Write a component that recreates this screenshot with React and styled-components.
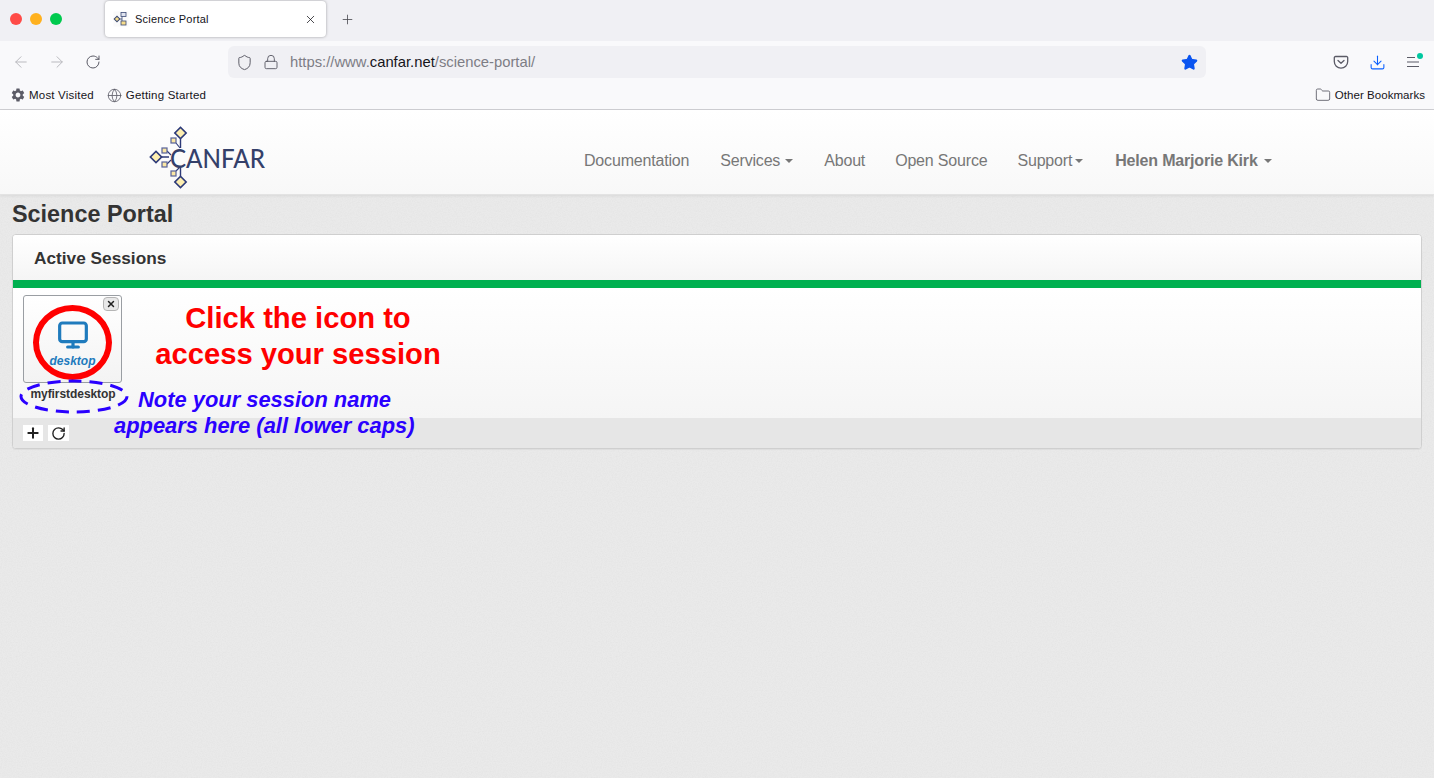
import React from "react"
import styled, { createGlobalStyle } from "styled-components"
import { X, Plus, ArrowLeft, ArrowRight, RotateCw, Lock, Shield, Star, Globe, Folder, Download, Monitor } from "lucide-react"
import { MdSettings } from "react-icons/md"

const GlobalStyle = createGlobalStyle`
  html, body {
    margin: 0;
    padding: 0;
    height: 100%;
    font-family: "Liberation Sans", Arial, sans-serif;
  }
  #root { height: 100%; }
`

const noise = encodeURIComponent(
  `<svg xmlns="http://www.w3.org/2000/svg" width="200" height="200"><filter id="n"><feTurbulence type="fractalNoise" baseFrequency="0.8" numOctaves="2" stitchTiles="stitch"/><feColorMatrix values="0 0 0 0 0.7 0 0 0 0 0.7 0 0 0 0 0.7 0.6 0 0 0 -0.2"/></filter><rect width="200" height="200" filter="url(#n)"/></svg>`
)

const Page = styled.div`
  position: relative;
  width: 1434px;
  height: 778px;
  overflow: hidden;
  display: flex;
  flex-direction: column;
  background-color: #eaeaea;
  background-image: url("data:image/svg+xml,${noise}");
`

const TabStrip = styled.div`
  height: 41px;
  background: #f0f0f4;
  display: flex;
  align-items: flex-start;
  flex-shrink: 0;
`

const TrafficLights = styled.div`
  display: flex;
  gap: 8px;
  padding: 13px 0 0 10px;
  width: 105px;
  flex-shrink: 0;
  box-sizing: border-box;
`

const Light = styled.span`
  width: 12px;
  height: 12px;
  border-radius: 50%;
  background: ${(props) => props.color};
`

const Tab = styled.div`
  margin-top: 1px;
  width: 221px;
  height: 36px;
  box-sizing: border-box;
  background: #fff;
  border-radius: 4px;
  box-shadow: 0 0 3px rgba(0, 0, 0, 0.35);
  display: flex;
  align-items: center;
  padding: 0 9px 0 8px;
  font-size: 11px;
  letter-spacing: 0.2px;
  color: #15141a;
`

const TabTitle = styled.span`
  flex: 1;
  margin-left: 6px;
`

const NewTab = styled.div`
  margin: 12px 0 0 14px;
  display: flex;
  color: #4a4a50;
`

const Toolbar = styled.div`
  height: 42px;
  background: #f9f9fb;
  display: flex;
  align-items: center;
  flex-shrink: 0;
  padding-left: 12px;
`

const NavIcon = styled.span`
  display: flex;
  margin-right: ${(props) => props.$gap ?? 18}px;
  color: ${(props) => props.color || "#5b5b66"};
`

const UrlBar = styled.div`
  margin-left: 127px;
  width: 978px;
  height: 32px;
  box-sizing: border-box;
  border-radius: 6px;
  background: #f0f0f4;
  display: flex;
  align-items: center;
  padding: 0 8px 0 8px;
  color: #5b5b66;
`

const LockIcon = styled(Lock)`
  margin-left: 10px;
`

const Url = styled.div`
  flex: 1;
  margin-left: 11px;
  font-size: 14.8px;
  color: #7d7d85;
`

const UrlHost = styled.span`
  color: #15141a;
`

const ToolbarRight = styled.div`
  margin-left: 127px;
  display: flex;
  align-items: center;
  gap: 20px;
`

const MenuWrap = styled.span`
  position: relative;
  display: flex;
  color: #5b5b66;
`

const MenuDot = styled.span`
  position: absolute;
  top: -3px;
  right: -3px;
  width: 6px;
  height: 6px;
  border-radius: 50%;
  background: #00c8a0;
`

const Bookmarks = styled.div`
  height: 27px;
  box-sizing: border-box;
  background: #f9f9fb;
  border-bottom: 1px solid #cfcfd3;
  display: flex;
  align-items: center;
  flex-shrink: 0;
  padding: 0 9px 2px 10px;
  font-size: 11.5px;
  letter-spacing: 0.2px;
  color: #15141a;
`

const Bookmark = styled.div`
  display: flex;
  align-items: center;
  gap: ${(props) => props.$gap}px;
  margin-right: 13px;
  color: #15141a;
  svg { color: #5b5b66; }
`

const OtherBookmark = styled(Bookmark)`
  margin: 0 0 0 auto;
  letter-spacing: 0.05px;
`

const Navbar = styled.nav`
  height: 85px;
  flex-shrink: 0;
  box-sizing: border-box;
  background: linear-gradient(to bottom, #ffffff, #f8f8f8);
  border-bottom: 1px solid #e3e3e3;
  box-shadow: 0 1px 3px rgba(0, 0, 0, 0.07);
  display: flex;
  align-items: flex-start;
  padding: 15px 0 0 148px;
`

const NavLinks = styled.div`
  margin: 26px 0 0 300px;
  display: flex;
  align-items: center;
  font-size: 16px;
  line-height: 20px;
  letter-spacing: -0.18px;
  color: #777;
`

const NavLink = styled.span`
  margin-right: ${(props) => props.$gap}px;
  font-weight: ${(props) => (props.$bold ? 700 : 400)};
  display: flex;
  align-items: center;
`

const Caret = styled.span`
  display: inline-block;
  margin-left: ${(props) => props.$gap ?? 6}px;
  width: 0;
  height: 0;
  border-top: 4px solid #777;
  border-left: 4px solid transparent;
  border-right: 4px solid transparent;
`

const Main = styled.main`
  padding: 0 12px;
`

const PageTitle = styled.h1`
  margin: 0;
  padding: 6px 0 7px;
  font-size: 23.4px;
  line-height: 26px;
  font-weight: 700;
  color: #333;
`

const Panel = styled.section`
  width: 1410px;
  height: 215px;
  box-sizing: border-box;
  border: 1px solid #cfcfcf;
  border-radius: 4px;
  background: #fff;
  box-shadow: 0 1px 1px rgba(0, 0, 0, 0.05);
  overflow: hidden;
  display: flex;
  flex-direction: column;
`

const PanelHeading = styled.div`
  height: 45px;
  flex-shrink: 0;
  box-sizing: border-box;
  padding: 12px 21px 0;
  font-size: 17.25px;
  line-height: 22px;
  font-weight: 700;
  color: #333;
  background: linear-gradient(to bottom, #ffffff, #f5f5f5);
`

const GreenBar = styled.div`
  height: 8px;
  flex-shrink: 0;
  background: #00b050;
`

const PanelBody = styled.div`
  height: 130px;
  flex-shrink: 0;
  box-sizing: border-box;
  padding: 7px 0 0 10px;
  background: linear-gradient(to bottom, #ffffff, #f5f5f5);
`

const Session = styled.div`
  width: 100px;
`

const SessionCard = styled.div`
  position: relative;
  width: 99px;
  height: 88px;
  box-sizing: border-box;
  border: 1px solid #9a9ea3;
  border-radius: 3px;
  background: linear-gradient(to bottom, #ffffff, #f3f3f3);
  display: flex;
  flex-direction: column;
  align-items: center;
  padding-top: 23px;
  color: #1f7bbd;
`

const CloseButton = styled.span`
  position: absolute;
  top: 1px;
  right: 2px;
  width: 16px;
  height: 14px;
  box-sizing: border-box;
  border: 1px solid #b5b5b5;
  border-radius: 4px;
  background: #e8e8e8;
  display: flex;
  align-items: center;
  justify-content: center;
  color: #222;
`

const SessionType = styled.span`
  font-size: 12px;
  line-height: 13px;
  margin-top: 4px;
  font-weight: 700;
  font-style: italic;
  color: #1f7bbd;
`

const SessionName = styled.div`
  width: 100px;
  text-align: center;
  margin-top: 4px;
  font-size: 12px;
  line-height: 14px;
  font-weight: 700;
  letter-spacing: -0.06px;
  color: #333;
`

const PanelFooter = styled.div`
  flex: 1;
  background: #e6e6e6;
  display: flex;
  align-items: flex-start;
  gap: 5px;
  padding: 7px 0 0 10px;
`

const FooterButton = styled.span`
  width: ${(props) => props.$width}px;
  height: 16px;
  background: #fff;
  display: flex;
  align-items: center;
  justify-content: center;
  color: #222;
`

const RedRing = styled.div`
  position: absolute;
  left: 33px;
  top: 305px;
  width: 79px;
  height: 75px;
  box-sizing: border-box;
  border: 6px solid #ff0000;
  border-radius: 50%;
`

const BlueRing = styled.svg`
  position: absolute;
  left: 18px;
  top: 378px;
`

const RedNote = styled.div`
  position: absolute;
  left: 148px;
  top: 300px;
  width: 300px;
  text-align: center;
  font-size: 29.2px;
  line-height: 36px;
  font-weight: 700;
  color: #ff0000;
`

const BlueNote = styled.div`
  position: absolute;
  left: 114px;
  top: 387px;
  font-size: 21.9px;
  line-height: 26px;
  font-weight: 700;
  font-style: italic;
  color: #2a00ff;
`

const BlueNoteFirst = styled.div`
  margin-left: 24px;
`

const PocketIcon = () => (
  <svg width="16" height="16" viewBox="0 0 16 16" fill="none" stroke="#5b5b66" strokeWidth="1.3" strokeLinecap="round" strokeLinejoin="round">
    <path d="M2.5 2.5h11a1.2 1.2 0 0 1 1.2 1.2v3.8a6.7 6.7 0 0 1-13.4 0V3.7a1.2 1.2 0 0 1 1.2-1.2z" />
    <path d="M5 6.5l3 2.8 3-2.8" />
  </svg>
)

const MenuIcon = () => (
  <svg width="14" height="12" viewBox="0 0 14 12" fill="none" stroke="#5b5b66" strokeWidth="1.2">
    <path d="M1 1.5h8M1 6h12M1 10.5h12" />
  </svg>
)

const TabFavicon = () => (
  <svg width="16" height="16" viewBox="0 0 16 16" fill="none">
    <rect x="0.5" y="0.5" width="15" height="15" fill="#fafafa" />
    <path d="M3 8h6M9 3.5v9" stroke="#3b4a75" strokeWidth="0.8" />
    <rect x="2" y="6" width="4" height="4" transform="rotate(45 4 8)" fill="#f6dc8a" stroke="#3b4a75" />
    <rect x="8" y="1.5" width="5" height="4" fill="#dfe3ee" stroke="#3b4a75" strokeWidth="0.8" />
    <rect x="8" y="10" width="5" height="4" fill="#f6dc8a" stroke="#3b4a75" strokeWidth="0.8" />
  </svg>
)

const Diamond = ({ cx, cy }) => (
  <rect x={cx - 4} y={cy - 4} width="8" height="8" transform={`rotate(45 ${cx} ${cy})`} fill="#fdeeb0" stroke="#2d3a78" strokeWidth="1.6" />
)

const SmallSquare = ({ x, y }) => (
  <rect x={x} y={y} width="5" height="5" fill="#fbe7a4" stroke="#56629a" strokeWidth="1.2" />
)

const CanfarLogo = () => (
  <svg width="136" height="64" viewBox="0 0 136 64" fill="none">
    <path d="M32.5 14v9M32.5 42v9M14 32h7" stroke="#2d3a78" strokeWidth="1.4" />
    <path d="M19 26l4 4M19 39l4-4M28 18l4 5M28 46l4-4" stroke="#2d3a78" strokeWidth="1.1" />
    <Diamond cx={32.5} cy={8} />
    <Diamond cx={32.5} cy={57} />
    <Diamond cx={8} cy={32} />
    <SmallSquare x={23} y={13} />
    <SmallSquare x={23} y={46} />
    <SmallSquare x={14} y={23} />
    <SmallSquare x={14} y={37} />
    <text x="22" y="43" fontFamily="Lato, sans-serif" fontSize="27" fontWeight="500" fill="#34406a" textLength="95" lengthAdjust="spacingAndGlyphs">CANFAR</text>
  </svg>
)

const App = () => {
  return (
    <Page>
      <GlobalStyle />
      <TabStrip>
        <TrafficLights>
          <Light color="#ff4b47" />
          <Light color="#ffb11e" />
          <Light color="#00ca4e" />
        </TrafficLights>
        <Tab>
          <TabFavicon />
          <TabTitle>Science Portal</TabTitle>
          <X size={13} strokeWidth={1.4} />
        </Tab>
        <NewTab>
          <Plus size={15} strokeWidth={1.3} />
        </NewTab>
      </TabStrip>

      <Toolbar>
        <NavIcon color="#b8b8bd"><ArrowLeft size={18} strokeWidth={1.3} /></NavIcon>
        <NavIcon color="#b8b8bd" $gap={19}><ArrowRight size={18} strokeWidth={1.3} /></NavIcon>
        <NavIcon $gap={0}><RotateCw size={16} strokeWidth={1.5} /></NavIcon>
        <UrlBar>
          <Shield size={17} strokeWidth={1.4} />
          <LockIcon size={16} strokeWidth={1.4} />
          <Url>https://www.<UrlHost>canfar.net</UrlHost>/science-portal/</Url>
          <Star size={17} fill="#0a54f0" color="#0a54f0" />
        </UrlBar>
        <ToolbarRight>
          <PocketIcon />
          <NavIcon color="#0a60ff" $gap={0}><Download size={17} strokeWidth={1.5} /></NavIcon>
          <MenuWrap>
            <MenuIcon />
            <MenuDot />
          </MenuWrap>
        </ToolbarRight>
      </Toolbar>

      <Bookmarks>
        <Bookmark $gap={3}><MdSettings size={16} />Most Visited</Bookmark>
        <Bookmark $gap={4}><Globe size={15} strokeWidth={1.3} />Getting Started</Bookmark>
        <OtherBookmark $gap={4}><Folder size={16} strokeWidth={1.3} />Other Bookmarks</OtherBookmark>
      </Bookmarks>

      <Navbar>
        <CanfarLogo />
        <NavLinks>
          <NavLink $gap={31}>Documentation</NavLink>
          <NavLink $gap={31}>Services<Caret $gap={5} /></NavLink>
          <NavLink $gap={30}>About</NavLink>
          <NavLink $gap={30}>Open Source</NavLink>
          <NavLink $gap={32}>Support<Caret $gap={3} /></NavLink>
          <NavLink $bold $gap={0}>Helen Marjorie Kirk<Caret /></NavLink>
        </NavLinks>
      </Navbar>

      <Main>
        <PageTitle>Science Portal</PageTitle>
        <Panel>
          <PanelHeading>Active Sessions</PanelHeading>
          <GreenBar />
          <PanelBody>
            <Session>
              <SessionCard>
                <CloseButton><X size={10} strokeWidth={3.5} /></CloseButton>
                <Monitor size={32} strokeWidth={2.4} />
                <SessionType>desktop</SessionType>
              </SessionCard>
              <SessionName>myfirstdesktop</SessionName>
            </Session>
          </PanelBody>
          <PanelFooter>
            <FooterButton $width={20}><Plus size={16} strokeWidth={3} /></FooterButton>
            <FooterButton $width={21}><RotateCw size={15} strokeWidth={2.2} /></FooterButton>
          </PanelFooter>
        </Panel>
      </Main>

      <RedRing />
      <BlueRing width="112" height="38" viewBox="0 0 112 38" fill="none">
        <ellipse cx="56" cy="18.5" rx="53" ry="15.5" stroke="#2a00ff" strokeWidth="3" strokeDasharray="13 8" />
      </BlueRing>
      <RedNote>
        Click the icon to<br />access your session
      </RedNote>
      <BlueNote>
        <BlueNoteFirst>Note your session name</BlueNoteFirst>
        appears here (all lower caps)
      </BlueNote>
    </Page>
  )
}

export default App
